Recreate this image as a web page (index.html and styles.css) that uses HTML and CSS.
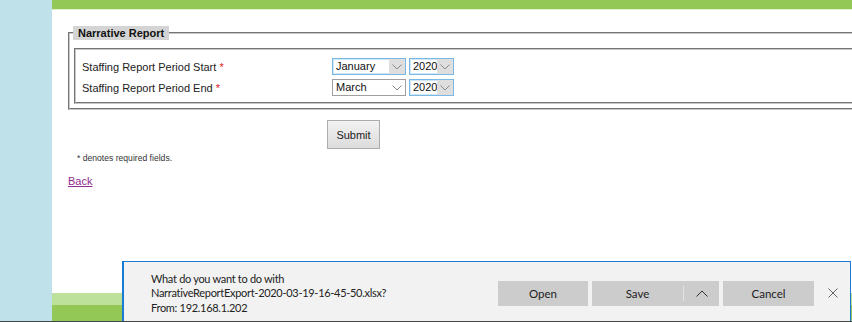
FILE: index.html
```html
<!DOCTYPE html>
<html lang="en">
<head>
    <meta charset="UTF-8">
    <title>Narrative Report</title>
    <link rel="stylesheet" href="styles.css">
</head>
<body>
  <div class="page">
    <div class="sidebar"></div>

    <div class="main">
      <div class="top-bar"></div>

      <div class="content">
        <fieldset class="report-box">
          <legend>Narrative Report</legend>
          <div class="report-fields">
            <div class="field-row">
              <span class="field-label">Staffing Report Period Start <span class="req">*</span></span>
              <div class="select select-focus select-month">
                <span class="select-text">January</span>
                <span class="select-arrow arrow-grey"><svg width="10" height="6" viewBox="0 0 10 6"><path d="M0.5 0.5 L5 5 L9.5 0.5" fill="none" stroke="#8a8a8a" stroke-width="1"/></svg></span>
              </div>
              <div class="select select-focus select-year">
                <span class="select-text">2020</span>
                <span class="select-arrow arrow-grey"><svg width="10" height="6" viewBox="0 0 10 6"><path d="M0.5 0.5 L5 5 L9.5 0.5" fill="none" stroke="#8a8a8a" stroke-width="1"/></svg></span>
              </div>
            </div>
            <div class="field-row">
              <span class="field-label">Staffing Report Period End <span class="req">*</span></span>
              <div class="select select-month">
                <span class="select-text">March</span>
                <span class="select-arrow"><svg width="10" height="6" viewBox="0 0 10 6"><path d="M0.5 0.5 L5 5 L9.5 0.5" fill="none" stroke="#8a8a8a" stroke-width="1"/></svg></span>
              </div>
              <div class="select select-focus select-year">
                <span class="select-text">2020</span>
                <span class="select-arrow arrow-grey"><svg width="10" height="6" viewBox="0 0 10 6"><path d="M0.5 0.5 L5 5 L9.5 0.5" fill="none" stroke="#8a8a8a" stroke-width="1"/></svg></span>
              </div>
            </div>
          </div>
        </fieldset>

        <div class="submit-row">
          <button class="button-submit">Submit</button>
        </div>

        <p class="note">* denotes required fields.</p>

        <a class="back-link" href="#">Back</a>
      </div>

      <div class="footer">
        <div class="footer-light"></div>
        <div class="footer-dark"></div>
      </div>
    </div>
  </div>
  <div class="taskbar-line"></div>

  <div class="download-bar">
    <div class="download-text">
      <p>What do you want to do with</p>
      <p>NarrativeReportExport-2020-03-19-16-45-50.xlsx?</p>
      <p>From: 192.168.1.202</p>
    </div>
    <div class="download-buttons">
      <button class="dl-button dl-open">Open</button>
      <div class="dl-save-group">
        <button class="dl-button dl-save">Save</button>
        <span class="dl-sep"></span>
        <button class="dl-button dl-caret"><svg width="12" height="7" viewBox="0 0 12 7"><path d="M0.5 6.5 L6 1 L11.5 6.5" fill="none" stroke="#333" stroke-width="1"/></svg></button>
      </div>
      <button class="dl-button dl-cancel">Cancel</button>
      <span class="dl-close"><svg width="10" height="10" viewBox="0 0 10 10"><path d="M0.5 0.5 L9.5 9.5 M9.5 0.5 L0.5 9.5" fill="none" stroke="#666" stroke-width="1"/></svg></span>
    </div>
  </div>
</body>
</html>
```

FILE: styles.css
```css
body {
    margin: 0px;
    font-family: "Liberation Sans", Arial, sans-serif;
    background-color: #ffffff;
    height: 322px;
    overflow: hidden;
}

.page {
    display: flex;
    height: 321px;
}

.sidebar {
    width: 52px;
    flex-shrink: 0;
    background-color: #bfe1ea;
}

.main {
    flex: 1;
    display: flex;
    flex-direction: column;
    overflow: hidden;
}

.top-bar {
    height: 9px;
    background-color: #93c756;
    border-bottom: 1px solid #dff0cf;
}

.content {
    flex: 1;
    padding-left: 16px;
    padding-top: 16px;
}

/* fieldset */

.report-box {
    margin: 0px;
    margin-right: -40px;
    padding: 0px 4px 4px 4px;
    border: 2px groove #c8c8c8;
}

legend {
    font-size: 11px;
    font-weight: bold;
    color: #111;
    background-color: #d4d4d4;
    padding: 0px 5px;
    margin-left: -1px;
    line-height: 14px;
}

.report-fields {
    margin-top: 8px;
    border: 2px groove #c8c8c8;
    padding: 6px 0px 4px 6px;
}

.field-row {
    display: flex;
    align-items: center;
    height: 21px;
}

.field-label {
    font-size: 11px;
    color: #222;
    width: 250px;
}

.req {
    color: #e02020;
}

.select {
    display: flex;
    align-items: stretch;
    height: 17px;
    box-sizing: border-box;
    border: 1px solid #a0a0a0;
    background-color: #ffffff;
    margin-right: 3px;
    font-size: 11px;
    color: #111;
}

.select-focus {
    border: 1px solid #7ab8e6;
    box-shadow: inset 0 0 0 1px #cfe6f7;
}

.select-month {
    width: 74px;
}

.select-year {
    width: 45px;
}

.select-text {
    flex: 1;
    padding-left: 3px;
    line-height: 15px;
}

.select-arrow {
    width: 16px;
    display: flex;
    align-items: center;
    justify-content: center;
}

.arrow-grey {
    background-color: #dedede;
}

/* submit */

.submit-row {
    margin-top: 10px;
    padding-left: 259px;
}

.button-submit {
    font-family: "Liberation Sans", Arial, sans-serif;
    font-size: 11px;
    color: #222;
    width: 53px;
    height: 29px;
    border: 1px solid #acacac;
    background: linear-gradient(#f2f2f2, #dcdcdc);
    padding: 0px;
    margin: 0px;
    vertical-align: top;
}

.note {
    font-size: 8.6px;
    color: #333;
    margin: 4px 0px 0px 9px;
}

.back-link {
    display: inline-block;
    margin-top: 12px;
    font-size: 11px;
    color: #8e2b8e;
}

/* footer */

.footer-light {
    height: 12px;
    background-color: #bde09a;
}

.footer-dark {
    height: 16px;
    background-color: #93c756;
}

.taskbar-line {
    height: 1px;
    background-color: #454545;
}

/* download notification, lies over the page */

.download-bar {
    position: absolute;
    left: 122px;
    right: 1px;
    bottom: 1px;
    height: 60px;
    box-sizing: border-box;
    background-color: #f2f2f2;
    border: 1px solid #1a7bd5;
    border-left-width: 2px;
    border-bottom: 0px;
    display: flex;
    align-items: center;
    font-family: Lato, "Liberation Sans", sans-serif;
}

.download-text {
    padding-left: 27px;
    width: 347px;
    padding-top: 4px;
}

.download-text p {
    margin: 0px;
    font-size: 11px;
    letter-spacing: -0.3px;
    line-height: 14.5px;
    color: #222;
}

.download-buttons {
    display: flex;
    align-items: center;
    margin-top: 3px;
}

.dl-button {
    font-family: Lato, "Liberation Sans", sans-serif;
    font-size: 11.5px;
    color: #222;
    background-color: #cccccc;
    border: 0px;
    height: 25px;
    padding: 0px;
    margin: 0px;
}

.dl-open {
    width: 90px;
    margin-right: 4px;
}

.dl-save-group {
    display: flex;
    align-items: center;
    background-color: #cccccc;
    height: 25px;
    width: 127px;
    margin-right: 4px;
}

.dl-save {
    width: 91px;
}

.dl-sep {
    width: 1px;
    height: 15px;
    background-color: #e4e4e4;
}

.dl-caret {
    flex: 1;
    display: flex;
    align-items: center;
    justify-content: center;
}

.dl-cancel {
    width: 91px;
}

.dl-close {
    display: flex;
    margin-left: 14px;
}
```
